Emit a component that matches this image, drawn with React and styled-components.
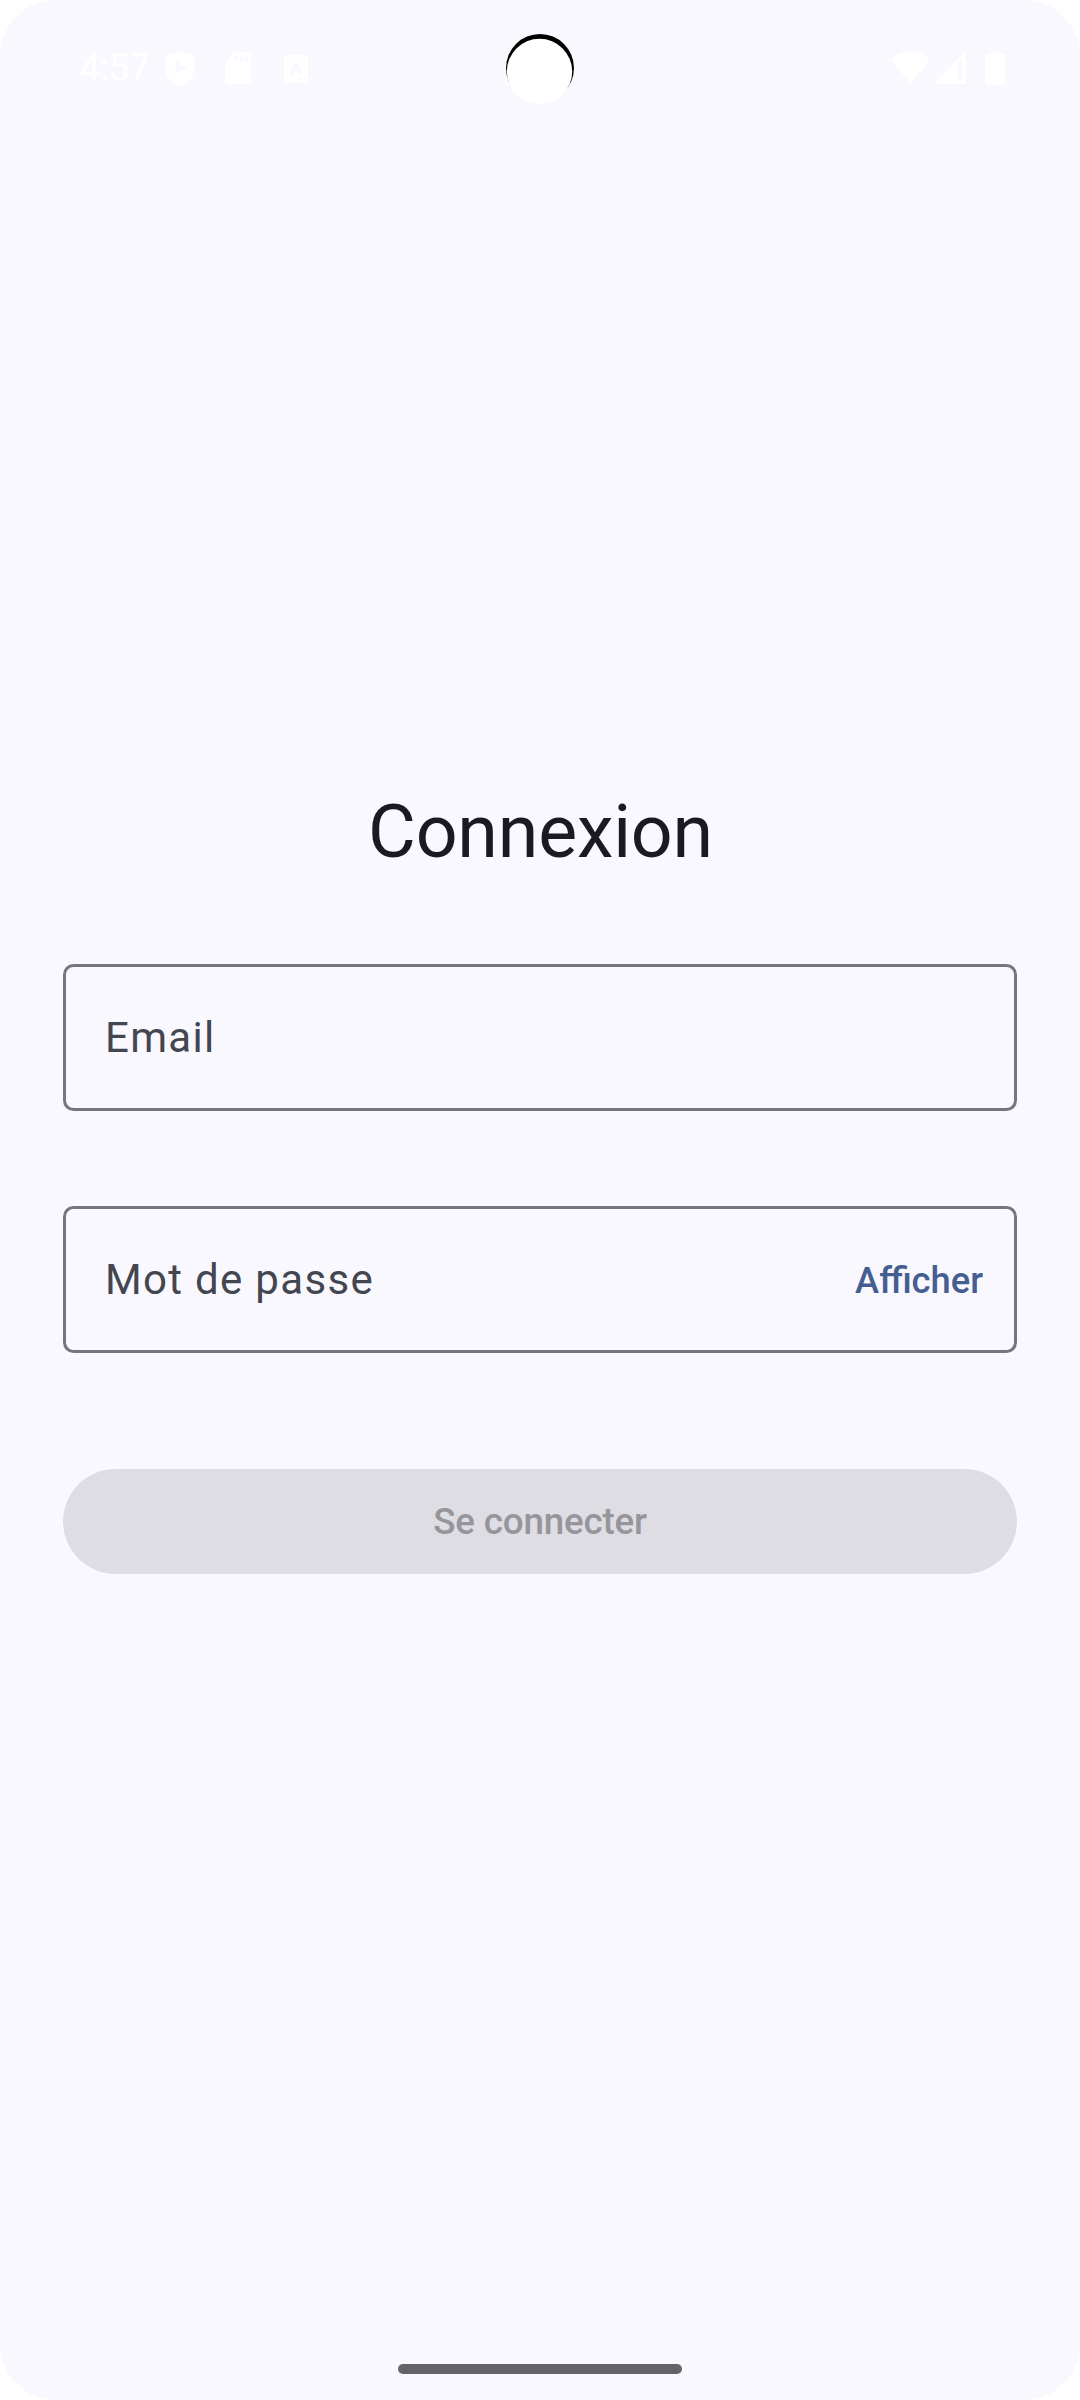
import React, { useState } from "react";
import styled, { createGlobalStyle } from "styled-components";

const GlobalStyle = createGlobalStyle`
  *, *::before, *::after { box-sizing: border-box; }
  body { margin: 0; background: #ffffff; }
`;

const Screen = styled.div`
  position: relative;
  display: flex;
  flex-direction: column;
  width: 1080px;
  height: 2400px;
  overflow: hidden;
  border-radius: 56px;
  background: #f9f8ff;
  font-family: Roboto, sans-serif;
`;

const StatusBar = styled.header`
  display: flex;
  align-items: center;
  justify-content: space-between;
  height: 136px;
  padding: 0 75px 0 79px;
  color: #ffffff;
`;

const StatusGroup = styled.div`
  display: flex;
  align-items: center;
`;

const Clock = styled.span`
  width: 86px;
  font-size: 38px;
  line-height: 44px;
  letter-spacing: -0.6px;
`;

const StatusIcon = styled.svg`
  display: block;
  flex: none;
  fill: currentColor;
  margin-left: ${(p) => p.$gap || 0}px;
`;

const Camera = styled.svg`
  position: absolute;
  top: 28px;
  left: 500px;
`;

const Form = styled.form`
  display: flex;
  flex: 1;
  flex-direction: column;
  align-items: stretch;
  padding: 649px 63px 0;
`;

const Title = styled.h1`
  margin: 0 0 84px;
  padding-left: 1px;
  color: #1a1b20;
  font-size: 73.5px;
  font-weight: 400;
  line-height: 95px;
  letter-spacing: -0.2px;
  text-align: center;
`;

const Field = styled.label`
  display: flex;
  align-items: center;
  height: 147px;
  margin-bottom: ${(p) => p.$after}px;
  padding: 0 31px 0 39px;
  border: 3px solid #757780;
  border-radius: 10.5px;
`;

const Input = styled.input`
  flex: 1;
  min-width: 0;
  height: 63px;
  padding: 0;
  border: 0;
  outline: 0;
  background: transparent;
  color: #1a1b20;
  font: 400 42px/63px Roboto, sans-serif;
  letter-spacing: 1.3125px;

  &::placeholder {
    color: #44464f;
    opacity: 1;
  }
`;

const RevealButton = styled.button`
  padding: 2px 0 0;
  border: 0;
  background: transparent;
  color: #465d91;
  font: 500 36.3px/53px Roboto, sans-serif;
`;

const SubmitButton = styled.button`
  height: 105px;
  padding: 0;
  border: 0;
  border-radius: 53px;
  background: #dedde3;
  color: #96959b;
  font: 500 36.75px/53px Roboto, sans-serif;
  letter-spacing: -0.2px;
`;

const NavigationBar = styled.footer`
  display: flex;
  justify-content: center;
  height: 36px;
`;

const HomeHandle = styled.div`
  width: 284px;
  height: 10px;
  border-radius: 5px;
  background: #646567;
`;

const ShieldIcon = () => (
  <StatusIcon width="30" height="37" viewBox="0 0 30 37">
    <path
      fillRule="evenodd"
      d="M15 0.500 C11 3 6 4.500 2.500 5 Q.5 5.500 .5 8 V16 C.5 26 5 32 13 36 Q15 37 17 36 C25 32 29.500 26 29.500 16 V8 Q29.500 5.500 27.500 5 C24 4.500 19 3 15 0.500Z M10.500 11 L22.500 17.500 L10.500 24Z"
    />
  </StatusIcon>
);

const SdCardIcon = () => (
  <StatusIcon $gap={30} width="26" height="32" viewBox="0 0 26 32">
    <path
      fillRule="evenodd"
      d="M10 0 H23 Q26 0 26 3 V29 Q26 32 23 32 H3 Q0 32 0 29 V10Z M10 3.500 V9.500 H13 V3.500Z M15 3.500 V9.500 H18 V3.500Z M20 3.500 V9.500 H23 V3.500Z"
    />
  </StatusIcon>
);

const KeyboardIcon = () => (
  <StatusIcon $gap={33} width="24" height="27" viewBox="0 0 24 27">
    <path
      fillRule="evenodd"
      d="M2 0 H22 Q24 0 24 2 V25 Q24 27 22 27 H2 Q0 27 0 25 V2 Q0 0 2 0Z M13 23 V25 H15 V23Z M16.500 23 V25 H18.500 V23Z M20 23 V25 H22 V23Z"
    />
    <text x="12" y="20" fill="#f9f8ff" fontSize="18" fontWeight="700" textAnchor="middle">
      A
    </text>
  </StatusIcon>
);

const WifiIcon = () => (
  <StatusIcon width="39" height="34" viewBox="0 0 39 34">
    <path d="M0 8.500 C11 -2.500 28 -2.500 39 8.500 L19.500 33Z" />
  </StatusIcon>
);

const SignalIcon = () => (
  <StatusIcon $gap={3} width="33" height="34" viewBox="0 0 33 34">
    <path fillRule="evenodd" d="M0 33 L33 0 V33Z M25 12.500 V29.500 H29 V8.500Z" />
  </StatusIcon>
);

const BatteryIcon = () => (
  <StatusIcon $gap={19} width="20" height="34" viewBox="0 0 20 34">
    <path d="M6 0 H14 V3 H18 Q20 3 20 5 V32 Q20 34 18 34 H2 Q0 34 0 32 V5 Q0 3 2 3 H6Z" />
  </StatusIcon>
);

export default function App() {
  const [visible, setVisible] = useState(false);

  return (
    <>
      <GlobalStyle />
      <Screen>
        <StatusBar>
          <StatusGroup>
            <Clock>4:57</Clock>
            <ShieldIcon />
            <SdCardIcon />
            <KeyboardIcon />
          </StatusGroup>
          <StatusGroup>
            <WifiIcon />
            <SignalIcon />
            <BatteryIcon />
          </StatusGroup>
        </StatusBar>
        <Camera width="80" height="80" viewBox="0 0 80 80">
          <circle cx="40" cy="40" r="34" fill="#000000" />
          <circle cx="39.5" cy="43.5" r="32.7" fill="#ffffff" />
        </Camera>
        <Form onSubmit={(e) => e.preventDefault()}>
          <Title>Connexion</Title>
          <Field $after={95}>
            <Input type="email" placeholder="Email" />
          </Field>
          <Field $after={116}>
            <Input type={visible ? "text" : "password"} placeholder="Mot de passe" />
            <RevealButton type="button" onClick={() => setVisible(!visible)}>
              Afficher
            </RevealButton>
          </Field>
          <SubmitButton disabled>Se connecter</SubmitButton>
        </Form>
        <NavigationBar>
          <HomeHandle />
        </NavigationBar>
      </Screen>
    </>
  );
}
